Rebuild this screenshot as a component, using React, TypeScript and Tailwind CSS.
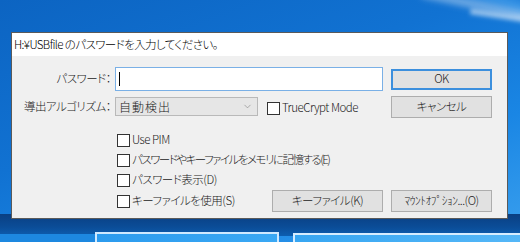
import { ChevronDown } from "lucide-react";

function Check({ label, tight }: { label: string; tight?: boolean }) {
  return (
    <div className="flex items-center gap-[2px]">
      <span className="w-[13px] h-[13px] border border-[#333] bg-white shrink-0" />
      <span className={tight ? "whitespace-nowrap tracking-[-1.5px]" : "whitespace-nowrap"}>{label}</span>
    </div>
  );
}

function Btn({ children, w, focus }: { children: React.ReactNode; w: string; focus?: boolean }) {
  return (
    <button
      className={
        focus
          ? `${w} h-[21px] bg-[#e1e1e1] border-2 border-[#3c8fdd] flex items-center justify-center text-[#222] whitespace-nowrap`
          : `${w} h-[22px] bg-[#e1e1e1] border border-[#adadad] flex items-center justify-center text-[#222] whitespace-nowrap`
      }
    >
      {children}
    </button>
  );
}

export default function App() {
  return (
    <div className="relative w-[520px] h-[242px] overflow-hidden bg-[linear-gradient(160deg,#0c64c2_0%,#1172d2_40%,#1a86e4_70%,#3aa0ee_100%)] font-['Noto_Sans_CJK_JP','Noto_Sans',sans-serif] font-light [font-feature-settings:'palt'] text-[11.5px] tracking-[-0.5px]">
      {/* desktop light streaks */}
      <div className="absolute -top-[20px] left-[330px] w-[260px] h-[14px] rotate-[18deg] bg-[#6cc0ff]/40 blur-[4px]" />
      <div className="absolute top-[6px] left-[420px] w-[160px] h-[8px] rotate-[12deg] bg-white/40 blur-[3px]" />
      <div className="absolute top-[14px] left-[470px] w-[80px] h-[6px] rotate-[8deg] bg-white/50 blur-[2px]" />

      {/* dark band under the dialog */}
      <div className="absolute left-0 top-[214px] w-[520px] h-[22px] bg-[linear-gradient(180deg,#0a3f82,#0b4d98_60%,#0d5eb0)]" />

      {/* background windows */}
      <div className="absolute left-[95px] top-[232px] w-[184px] h-[20px] border-2 border-[#cfe9ff] bg-[linear-gradient(90deg,#2c9bee,#3aa8f4)]" />
      <div className="absolute left-[293px] top-[233px] w-[240px] h-[20px] border-2 border-[#d6edff] bg-[linear-gradient(90deg,#37a6f2,#56b8f8)]" />
      <div className="absolute left-0 top-[234px] w-[95px] h-[10px] bg-[#1d88e0]" />

      {/* dialog */}
      <div className="relative ml-[11px] mt-[32px] w-[497px] h-[187px] border border-[#5a5a5a] bg-[#f0f0f0] flex flex-col text-[#1a1a1a]">
        <div className="h-[23px] bg-white flex items-center pl-[2px] text-black whitespace-nowrap tracking-[-0.6px]">
          H:¥USBfile のパスワードを入力してください。
        </div>

        {/* password row */}
        <div className="flex items-center mt-[11px] h-[24px]">
          <div className="w-[100px] text-right pr-[1px]">パスワード：</div>
          <div className="ml-[3px] w-[268px] h-[24px] border border-[#7ab0e6] bg-white flex items-center pl-[3px]">
            <span className="w-px h-[14px] bg-black" />
          </div>
          <div className="ml-[8px]">
            <Btn w="w-[101px]" focus>
              OK
            </Btn>
          </div>
        </div>

        {/* algorithm row */}
        <div className="flex items-center mt-[5px] h-[21px]">
          <div className="w-[100px] text-right pr-[1px]">導出アルゴリズム：</div>
          <div className="ml-[3px] w-[143px] h-[19px] border border-[#b9b9b9] bg-[#e6e6e6] flex items-center justify-between pl-[3px] pr-[4px]">
            <span className="text-[12px] tracking-[1px]">自動検出</span>
            <ChevronDown size={11} strokeWidth={1.2} className="text-[#777]" />
          </div>
          <div className="ml-[9px] w-[124px] pt-[3px]">
            <Check label="TrueCrypt Mode" />
          </div>
          <Btn w="w-[101px]">キャンセル</Btn>
        </div>

        {/* options */}
        <div className="flex flex-col mt-[13px] pl-[105px]">
          <div className="h-[20px] flex items-center">
            <Check label="Use PIM" />
          </div>
          <div className="h-[20px] flex items-center">
            <Check label="パスワードやキーファイルをメモリに記憶する(E)" tight />
          </div>
          <div className="h-[20px] flex items-center">
            <Check label="パスワード表示(D)" />
          </div>
          <div className="h-[22px] flex items-center">
            <div className="w-[155px]">
              <Check label="キーファイルを使用(S)" />
            </div>
            <Btn w="w-[111px]">キーファイル(K)</Btn>
            <div className="ml-[8px]">
              <Btn w="w-[101px]">ﾏｳﾝﾄｵﾌﾟｼｮﾝ...(O)</Btn>
            </div>
          </div>
        </div>
      </div>
    </div>
  );
}
